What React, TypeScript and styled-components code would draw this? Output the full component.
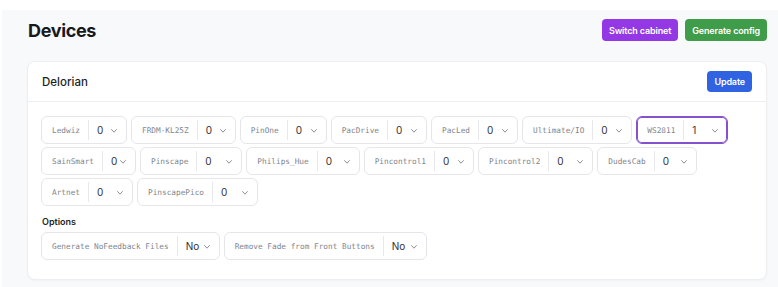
import React from "react";
import styled, { createGlobalStyle, css } from "styled-components";

const Global = createGlobalStyle`
  html, body { margin: 0; padding: 0; background: #ffffff; }
  body { font-family: Inter, "Noto Sans", "Liberation Sans", sans-serif; color: #1d1f24; }
  * { box-sizing: border-box; }
`;

const Page = styled.div`
  margin: 10px 0 0 2px;
  min-height: 277px;
  background: #f8f9fb;
  padding: 9px 11px 6px 25px;
`;

const TopBar = styled.div`
  display: flex;
  align-items: center;
  justify-content: space-between;
  height: 22px;
`;

const Title = styled.h1`
  margin: 0 0 0 1px;
  font-size: 18px;
  font-weight: 700;
  letter-spacing: -0.35px;
  color: #17191d;
`;

const Actions = styled.div`
  display: flex;
  gap: 7px;
`;

const Button = styled.button<{ $tone: "purple" | "green" | "blue" }>`
  height: ${(p) => (p.$tone === "blue" ? 21 : 22)}px;
  border: none;
  border-radius: 4px;
  padding: 0 7px;
  font-family: Inter, "Noto Sans", sans-serif;
  font-size: 9px;
  font-weight: 600;
  letter-spacing: -0.15px;
  color: #ffffff;
  cursor: pointer;
  background: ${(p) =>
    p.$tone === "purple" ? "#9438e6" : p.$tone === "green" ? "#3f9c49" : "#2f63e2"};
`;

const Card = styled.section`
  margin-top: 20px;
  background: #ffffff;
  border: 1px solid #eceef1;
  border-radius: 8px;
  box-shadow: 0 1px 2px rgba(20, 24, 40, 0.03);
`;

const CardHeader = styled.div`
  height: 40px;
  display: flex;
  align-items: center;
  justify-content: space-between;
  padding: 0 14px 0 14px;
  border-bottom: 1px solid #eceef1;
`;

const CardTitle = styled.div`
  font-size: 11.5px;
  font-weight: 500;
  color: #1d1f24;
`;

const CardBody = styled.div`
  padding: 14px 14px 19px 13px;
`;

const ChipWrap = styled.div`
  display: flex;
  flex-wrap: wrap;
  gap: 3px 4px;
`;

const Chip = styled.div<{ $active?: boolean }>`
  display: flex;
  align-items: stretch;
  height: 28px;
  border: 1px solid #e4e6ea;
  border-radius: 6px;
  background: #ffffff;
  ${(p) =>
    p.$active &&
    css`
      border-color: #8552cf;
      box-shadow: inset 0 0 0 1px #8552cf;
    `}
`;

const ChipLabel = styled.span`
  display: flex;
  align-items: center;
  padding: 0 8px 0 10px;
  font-family: "DejaVu Sans Mono", "Liberation Mono", monospace;
  font-size: 7.75px;
  color: #81868e;
  white-space: nowrap;
`;

const Divider = styled.span`
  width: 1px;
  margin: 3px 0;
  background: #e6e8eb;
`;

const Value = styled.span<{ $w: number }>`
  display: flex;
  align-items: center;
  justify-content: space-between;
  width: ${(p) => p.$w}px;
  padding: 0 9px 0 8px;
  font-size: 10px;
  color: #303238;
`;

const Chevron = styled.svg`
  flex: none;
  width: 6px;
  height: 4px;
  margin-top: 1px;
  color: #8a8f97;
`;

const Section = styled.div`
  margin-top: 9px;
`;

const SectionTitle = styled.div`
  font-size: 9px;
  font-weight: 600;
  line-height: 14px;
  color: #1d1f24;
  margin: 0 0 3px 1px;
`;

type Item = { label: string; value: string; w?: number; active?: boolean };

const devices: Item[] = [
  { label: "Ledwiz", value: "0" },
  { label: "FRDM-KL25Z", value: "0" },
  { label: "PinOne", value: "0", w: 38 },
  { label: "PacDrive", value: "0", w: 38 },
  { label: "PacLed", value: "0", w: 38 },
  { label: "Ultimate/IO", value: "0", w: 38 },
  { label: "WS2811", value: "1", w: 43, active: true },
  { label: "SainSmart", value: "0", w: 32 },
  { label: "Pinscape", value: "0", w: 44 },
  { label: "Philips_Hue", value: "0", w: 41 },
  { label: "Pincontrol1", value: "0", w: 38 },
  { label: "Pincontrol2", value: "0", w: 43 },
  { label: "DudesCab", value: "0", w: 41 },
  { label: "Artnet", value: "0", w: 43 },
  { label: "PinscapePico", value: "0", w: 44 },
];

const options: Item[] = [
  { label: "Generate NoFeedback Files", value: "No", w: 41 },
  { label: "Remove Fade from Front Buttons", value: "No", w: 42 },
];

function SelectChip({ item }: { item: Item }) {
  return (
    <Chip $active={item.active}>
      <ChipLabel>{item.label}</ChipLabel>
      <Divider />
      <Value $w={item.w ?? 37}>
        {item.value}
        <Chevron viewBox="0 0 6 4" fill="none">
          <polyline
            points="0.6,0.6 3,3.2 5.4,0.6"
            stroke="currentColor"
            strokeWidth="1"
            strokeLinecap="round"
            strokeLinejoin="round"
          />
        </Chevron>
      </Value>
    </Chip>
  );
}

export default function App() {
  return (
    <>
      <Global />
      <Page>
        <TopBar>
          <Title>Devices</Title>
          <Actions>
            <Button $tone="purple">Switch cabinet</Button>
            <Button $tone="green">Generate config</Button>
          </Actions>
        </TopBar>
        <Card>
          <CardHeader>
            <CardTitle>Delorian</CardTitle>
            <Button $tone="blue">Update</Button>
          </CardHeader>
          <CardBody>
            <ChipWrap>
              {devices.map((d) => (
                <SelectChip key={d.label} item={d} />
              ))}
            </ChipWrap>
            <Section>
              <SectionTitle>Options</SectionTitle>
              <ChipWrap>
                {options.map((d) => (
                  <SelectChip key={d.label} item={d} />
                ))}
              </ChipWrap>
            </Section>
          </CardBody>
        </Card>
      </Page>
    </>
  );
}
